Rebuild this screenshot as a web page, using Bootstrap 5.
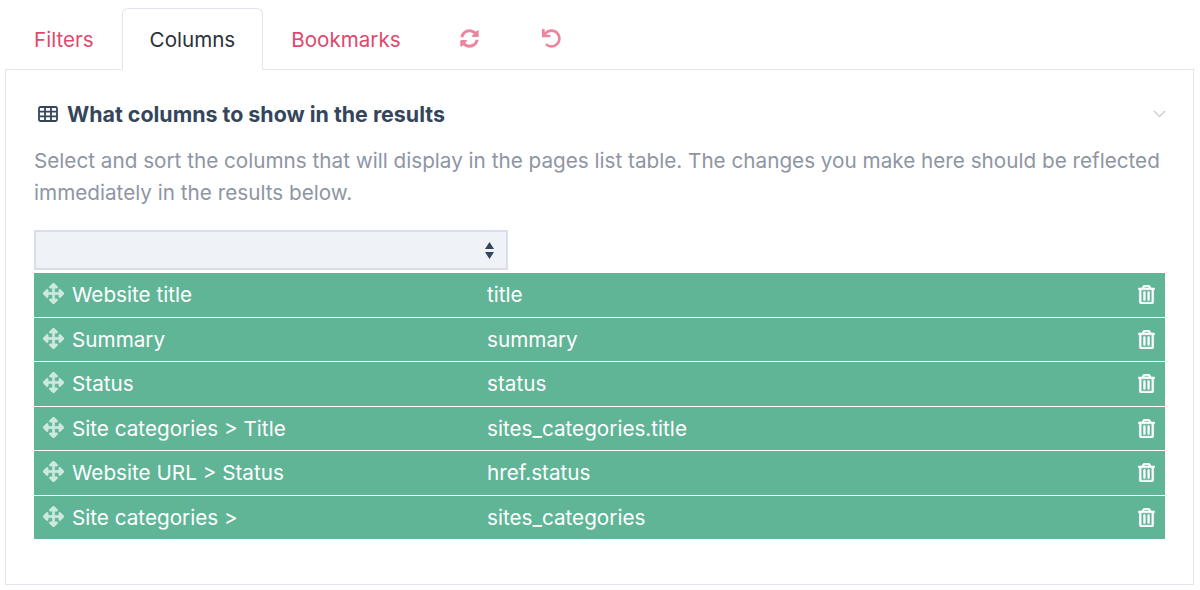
<!DOCTYPE html>
<html lang="en">
<head>
<meta charset="utf-8">
<title>Columns</title>
<link href="https://cdn.jsdelivr.net/npm/bootstrap@5.3.0/dist/css/bootstrap.min.css" rel="stylesheet">
<style>
html,body{height:100%;overflow:hidden}
body{font-family:Inter,"Liberation Sans",sans-serif;font-size:20.7px;color:#2c3138;background:#fff;padding:8px 6px 6px 5px}
.tab-strip{border-bottom:0;height:61px;flex-wrap:nowrap;padding-left:1px}
.tab-strip .nav-link{padding:0 27px;height:61px;line-height:62px;font-size:20.6px;color:#e0486c;border:1px solid transparent;border-radius:6px 6px 0 0;margin:0;background:none}
.tab-strip .nav-link.active{color:#2c3138;background:#fff;border-color:#dfe4ee #dfe4ee #fff;margin-bottom:-1px;height:62px;position:relative;z-index:2}
.tab-strip .icon-tab{width:82px;padding:0;display:flex;align-items:center;justify-content:center}
.tab-strip svg{width:19px;height:19px;fill:#e0486c;opacity:.65}
.panel-box{border:1px solid #e1e5f0;height:516px;padding:27px 28px 0 28px}
.head-row{height:34px}
.head-title{font-size:21.4px;font-weight:700;color:#34465c;margin:0;line-height:34px}
.table-ico{width:20px;height:16px;margin:0 9px 0 4px;flex:none}
.chev{width:13px;height:8px;margin-right:-1px}
.intro{color:#8e95a4;line-height:32px;margin:14px 0 21px;font-size:20.7px}
.pick{width:474px;height:40px;background:#eff2f7;border:2px solid #d8deea;display:flex;align-items:center;justify-content:flex-end;padding-right:12px;margin-bottom:3px}
.pick svg{width:9px;height:17px;fill:#34465c}
.col-row{background:#60b597;color:#fff;height:43.5px;margin-bottom:1px;padding:0 9px;display:flex;align-items:center}
.col-label{width:415px;white-space:nowrap}
.col-key{flex:1}
.drag-ico{width:21px;height:21px;fill:#cfe8df;stroke:#cfe8df;stroke-width:12;margin-right:8px;flex:none;margin-top:-2px}
.bin-ico{width:17px;height:19px;fill:#fff;stroke:#fff;stroke-width:14;margin-right:1px;flex:none}
</style>
</head>
<body>
<ul class="nav nav-tabs tab-strip">
  <li class="nav-item"><a class="nav-link" href="#">Filters</a></li>
  <li class="nav-item"><a class="nav-link active" href="#">Columns</a></li>
  <li class="nav-item"><a class="nav-link" href="#">Bookmarks</a></li>
  <li class="nav-item"><a class="nav-link icon-tab" href="#" aria-label="Refresh"><svg viewBox="0 0 512 512"><path d="M370.72 133.28C339.458 104.008 298.888 87.962 255.848 88c-77.458.068-144.328 53.178-162.791 126.85-1.344 5.363-6.122 9.15-11.651 9.15H24.103c-7.498 0-13.194-6.807-11.807-14.176C33.933 94.924 134.813 8 256 8c66.448 0 126.791 26.136 171.315 68.685L463.03 40.97C478.149 25.851 504 36.559 504 57.941V192c0 13.255-10.745 24-24 24H345.941c-21.382 0-32.09-25.851-16.971-40.971l41.75-41.749zM32 296h134.059c21.382 0 32.09 25.851 16.971 40.971l-41.75 41.75c31.262 29.273 71.835 45.319 114.876 45.28 77.418-.07 144.315-53.144 162.787-126.849 1.344-5.363 6.122-9.15 11.651-9.15h57.304c7.498 0 13.194 6.807 11.807 14.176C478.067 417.076 377.187 504 256 504c-66.448 0-126.791-26.136-171.315-68.685L48.97 471.03C33.851 486.149 8 475.441 8 454.059V320c0-13.255 10.745-24 24-24z"/></svg></a></li>
  <li class="nav-item"><a class="nav-link icon-tab" href="#" aria-label="Reset"><svg viewBox="0 0 512 512"><path d="M212.333 224.333H12c-6.627 0-12-5.373-12-12V12C0 5.373 5.373 0 12 0h48c6.627 0 12 5.373 12 12v78.112C117.773 39.279 184.26 7.47 258.175 8.007c136.906.994 246.448 111.623 246.157 248.532C504.041 393.258 393.12 504 256.333 504c-64.089 0-122.496-24.313-166.51-64.215-5.099-4.622-5.334-12.554-.467-17.42l33.967-33.967c4.474-4.474 11.662-4.717 16.401-.525C170.76 415.336 211.58 432 256.333 432c97.268 0 176-78.716 176-176 0-97.267-78.716-176-176-176-58.496 0-110.28 28.476-142.274 72.333h98.274c6.627 0 12 5.373 12 12v48c0 6.627-5.373 12-12 12z"/></svg></a></li>
</ul>
<div class="panel-box">
  <div class="d-flex align-items-center justify-content-between head-row">
    <div class="d-flex align-items-center">
      <svg class="table-ico" viewBox="0 0 20 16" fill="none" stroke="#34465c" stroke-width="1.8"><rect x="1" y="1" width="18" height="14" rx="1.5"/><path d="M1 5.600h18M1 10.300h18M7 1v14M13 1v14"/></svg>
      <h2 class="head-title">What columns to show in the results</h2>
    </div>
    <svg class="chev" viewBox="0 0 13 8" fill="none" stroke="#c4c8d0" stroke-width="1.2"><path d="M1 1l5.500 5.500L12 1"/></svg>
  </div>
  <p class="intro">Select and sort the columns that will display in the pages list table. The changes you make here should be reflected immediately in the results below.</p>
  <div class="pick"><svg viewBox="0 0 9 17"><path d="M4.500 0L9 7H0zM0 10h9l-4.500 7z"/></svg></div>
  <div class="col-row"><svg class="drag-ico" viewBox="0 0 512 512"><use href="#mv"/></svg><span class="col-label">Website title</span><span class="col-key">title</span><svg class="bin-ico" viewBox="0 0 448 512"><use href="#bin"/></svg></div>
  <div class="col-row"><svg class="drag-ico" viewBox="0 0 512 512"><use href="#mv"/></svg><span class="col-label">Summary</span><span class="col-key">summary</span><svg class="bin-ico" viewBox="0 0 448 512"><use href="#bin"/></svg></div>
  <div class="col-row"><svg class="drag-ico" viewBox="0 0 512 512"><use href="#mv"/></svg><span class="col-label">Status</span><span class="col-key">status</span><svg class="bin-ico" viewBox="0 0 448 512"><use href="#bin"/></svg></div>
  <div class="col-row"><svg class="drag-ico" viewBox="0 0 512 512"><use href="#mv"/></svg><span class="col-label">Site categories &gt; Title</span><span class="col-key">sites_categories.title</span><svg class="bin-ico" viewBox="0 0 448 512"><use href="#bin"/></svg></div>
  <div class="col-row"><svg class="drag-ico" viewBox="0 0 512 512"><use href="#mv"/></svg><span class="col-label">Website URL &gt; Status</span><span class="col-key">href.status</span><svg class="bin-ico" viewBox="0 0 448 512"><use href="#bin"/></svg></div>
  <div class="col-row"><svg class="drag-ico" viewBox="0 0 512 512"><use href="#mv"/></svg><span class="col-label">Site categories &gt;</span><span class="col-key">sites_categories</span><svg class="bin-ico" viewBox="0 0 448 512"><use href="#bin"/></svg></div>
</div>
<svg width="0" height="0" class="d-none"><defs>
<path id="mv" d="M352.201 425.775l-79.196 79.196c-9.373 9.373-24.568 9.373-33.941 0l-79.196-79.196c-15.119-15.119-4.411-40.971 16.971-40.97h51.162L228 284H127.196v51.162c0 21.382-25.851 32.09-40.971 16.971L7.029 272.937c-9.373-9.373-9.373-24.569 0-33.941L86.225 159.8c15.119-15.119 40.971-4.411 40.971 16.971V228H228V127.196h-51.23c-21.382 0-32.09-25.851-16.971-40.971l79.196-79.196c9.373-9.373 24.568-9.373 33.941 0l79.196 79.196c15.119 15.119 4.411 40.971-16.971 40.971h-51.162V228h100.804v-51.162c0-21.382 25.851-32.09 40.97-16.971l79.196 79.196c9.373 9.373 9.373 24.569 0 33.941L425.773 352.2c-15.119 15.119-40.971 4.411-40.97-16.971V284H284v100.804h51.23c21.382 0 32.09 25.851 16.971 40.971z"/>
<path id="bin" d="M268 416h24a12 12 0 0 0 12-12V188a12 12 0 0 0-12-12h-24a12 12 0 0 0-12 12v216a12 12 0 0 0 12 12zM432 80h-82.41l-34-56.7A48 48 0 0 0 274.41 0H173.59a48 48 0 0 0-41.16 23.3L98.41 80H16A16 16 0 0 0 0 96v16a16 16 0 0 0 16 16h16v336a48 48 0 0 0 48 48h288a48 48 0 0 0 48-48V128h16a16 16 0 0 0 16-16V96a16 16 0 0 0-16-16zM171.84 50.91A6 6 0 0 1 177 48h94a6 6 0 0 1 5.15 2.91L293.61 80H154.39zM368 464H80V128h288zm-212-48h24a12 12 0 0 0 12-12V188a12 12 0 0 0-12-12h-24a12 12 0 0 0-12 12v216a12 12 0 0 0 12 12z"/>
</defs></svg>
<script src="https://cdn.jsdelivr.net/npm/bootstrap@5.3.0/dist/js/bootstrap.bundle.min.js"></script>
</body>
</html>
